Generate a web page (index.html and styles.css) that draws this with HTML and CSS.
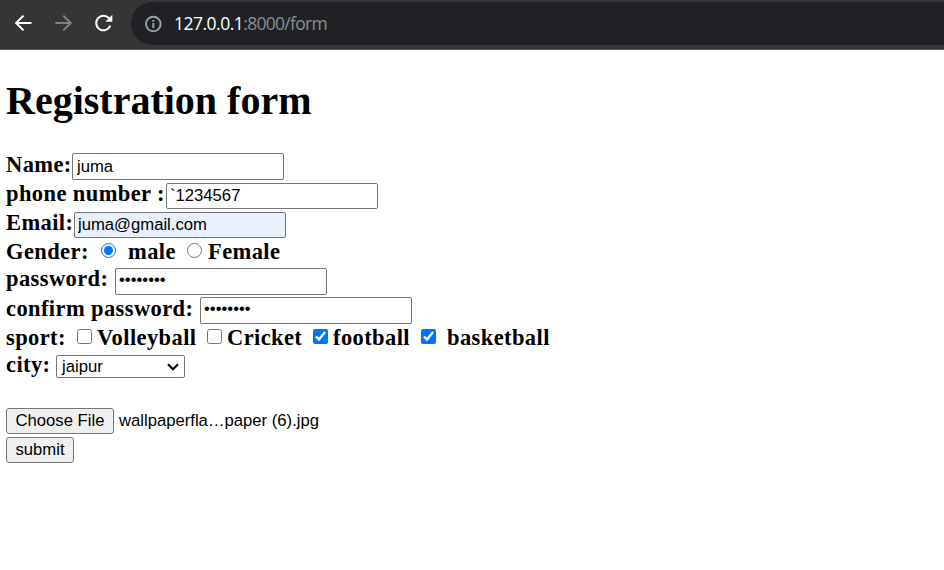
FILE: index.html
```
<!DOCTYPE html>
<html lang="en">
<head>
<meta charset="utf-8">
<title>Registration form</title>
<link rel="stylesheet" href="styles.css">
</head>
<body>
<header class="toolbar">
  <nav class="nav">
    <svg class="icon" viewBox="0 0 20 20"><path d="M18.5 10H3.3M10.5 2.6 3.1 10l7.4 7.4"/></svg>
    <svg class="icon dim" viewBox="0 0 20 20"><path d="M2.3 10h15.2M10.3 2.6l7.4 7.4-7.4 7.4"/></svg>
    <svg class="icon" viewBox="0 0 20 20"><path d="M17.3 12.6A7.3 7.3 0 1 1 16 5.2L17.7 7"/><path class="solid" d="M19.3 1.8v7h-7z"/></svg>
  </nav>
  <div class="address">
    <svg class="info" viewBox="0 0 18 18"><circle cx="9.3" cy="9" r="7.3"/><path d="M9.3 8v5M9.3 5v1.8"/></svg>
    <span class="url"><span class="host">127.0.0.1</span><span class="path">:8000/form</span></span>
  </div>
</header>
<main>
  <h1><span>Registration form</span></h1>
  <form>
    <div class="row"><label class="w-name"><span>Name:</span></label><input class="field tall" type="text" value="juma"></div>
    <div class="row"><label class="w-phone"><span>phone number :</span></label><input class="field low" type="text" value="`1234567"></div>
    <div class="row"><label class="w-email"><span>Email:</span></label><input class="field low filled" type="text" value="juma@gmail.com"></div>
    <div class="row short"><label class="w-gender"><span>Gender:</span></label><input class="tick radio" type="radio" name="g" checked><label class="w-male"><span>male</span></label><input class="tick radio" type="radio" name="g"><label class="after"><span>Female</span></label></div>
    <div class="row long"><label class="w-password"><span>password:</span></label><input class="field tall low secret" type="password" value="password"></div>
    <div class="row"><label class="w-confirm"><span>confirm password:</span></label><input class="field tall secret" type="password" value="password"></div>
    <div class="row short"><label class="w-sport"><span>sport:</span></label><input class="tick" type="checkbox"><label class="w-volley"><span>Volleyball</span></label><input class="tick" type="checkbox"><label class="w-cricket"><span>Cricket</span></label><input class="tick" type="checkbox" checked><label class="w-football"><span>football</span></label><input class="tick" type="checkbox" checked><label class="w-basket"><span>basketball</span></label></div>
    <div class="row"><label class="w-city"><span>city:</span></label><div class="select"><span>jaipur</span><svg class="chevron" viewBox="0 0 12 8"><path d="M1 1.2l5 5 5-5"/></svg></div></div>
    <div class="file"><button type="button" class="choose">Choose File</button><span>wallpaperfla…paper (6).jpg</span></div>
    <button type="button" class="submit">submit</button>
  </form>
</main>
</body>
</html>
```
FILE: styles.css
```
* { box-sizing: border-box; }
body { margin: 0; background: #fff; color: #000; overflow: hidden; }
.toolbar { display: flex; height: 50px; padding: 2px 0 4px 13px; background: #353535; border-bottom: 1px solid #5c5c5c; }
.nav { display: flex; gap: 20px; width: 118px; padding-top: 11px; }
.icon { width: 20px; height: 20px; fill: none; stroke: #fff; stroke-width: 2; }
.dim { stroke: #828282; }
.icon .solid { fill: #fff; stroke: none; }
.address { display: flex; align-items: center; flex: 1; height: 43px; padding-left: 13px; border-radius: 22px 0 0 22px; background: #202124; }
.info { width: 18px; height: 18px; margin-right: 12px; fill: none; stroke: #9aa0a6; stroke-width: 2; }
.url { padding-bottom: 1px; font: 17.5px/24px "Open Sans", sans-serif; letter-spacing: -0.62px; white-space: nowrap; }
.host { color: #fff; letter-spacing: -0.5px; }
.path { color: #8b8e92; letter-spacing: -0.72px; }
main { padding: 0 6px; }
h1 { margin: 0; padding-top: 28px; height: 101px; font: bold 40px/46px "Liberation Serif", serif; }
.row { display: flex; align-items: flex-start; height: 29px; font: bold 22.5px/27px "Liberation Serif", serif; letter-spacing: 0.4px; white-space: nowrap; }
.short { height: 27px; }
.long { height: 30px; }
label { flex: none; }
.w-name { width: 66px; }
.w-phone { width: 160px; }
.w-email { width: 68px; }
.w-gender { width: 95px; }
.w-male { width: 71px; padding-left: 12px; }
.after { padding-left: 6px; }
.w-password { width: 109px; }
.w-confirm { width: 194px; }
.w-sport { width: 71px; }
.w-volley { width: 115px; padding-left: 5px; }
.w-cricket { width: 91px; padding-left: 5px; }
.w-football { width: 93px; padding-left: 5px; }
.w-basket { padding-left: 11px; }
.w-city { width: 50px; }
.field { width: 212px; height: 26px; margin: 3px 0 0; padding: 1px 3px; border: 1px solid #767676; border-radius: 2px; background: #fff; color: #000; font: 16.67px "Liberation Sans", sans-serif; outline: none; }
.tall { height: 27px; margin-top: 2px; padding-left: 4px; }
.low { margin-top: 3px; }
.secret { padding-bottom: 4px; padding-left: 3px; }
.filled { background: #e8f0fe; }
.tick { flex: none; width: 15px; height: 15px; margin: 5px 0 0; accent-color: #0075ff; }
.select { display: flex; align-items: center; justify-content: space-between; width: 129px; height: 23px; margin-top: 4px; padding: 0 5px; border: 1px solid #767676; border-radius: 2px; font: 16.67px/21px "Liberation Sans", sans-serif; letter-spacing: 0; }
.chevron { width: 12px; height: 8px; fill: none; stroke: #000; stroke-width: 2.2; }
.file { display: flex; gap: 5px; padding-top: 28px; font: 16.67px/26px "Liberation Sans", sans-serif; }
button { display: block; height: 26px; padding: 0; border: 1px solid #767676; border-radius: 3px; background: #efefef; color: #000; font: 16.67px "Liberation Sans", sans-serif; }
.choose { width: 108px; }
.submit { width: 68px; margin-top: 3px; }
```
